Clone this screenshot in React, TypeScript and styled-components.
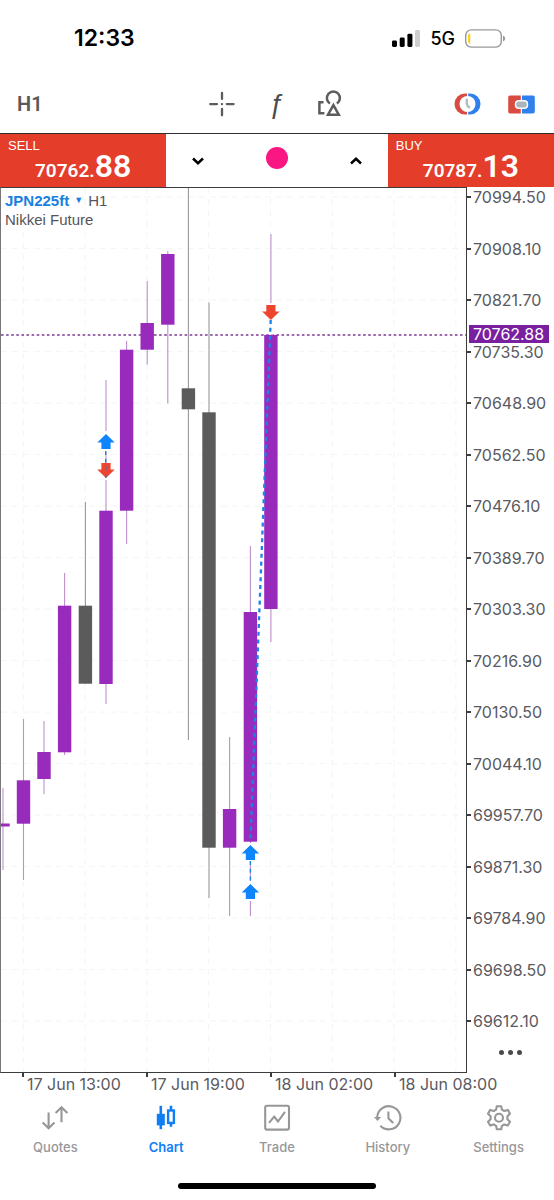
import React from "react";
import styled, { createGlobalStyle } from "styled-components";

const GlobalStyle = createGlobalStyle`
  * { box-sizing: border-box; }
  body {
    margin: 0;
    background: #fff;
    font-family: Inter, "Liberation Sans", sans-serif;
    color: #5a5a5f;
  }
  button { font: inherit; color: inherit; background: none; border: 0; padding: 0; margin: 0; }
  svg { display: block; }
`;

const Screen = styled.div`
  display: flex;
  flex-direction: column;
  min-height: 100vh;
  background: #fff;
  overflow: hidden;
`;

const StatusBar = styled.header`
  display: flex;
  align-items: center;
  justify-content: space-between;
  height: 76px;
  padding: 0 48px 0 74px;
`;

const Clock = styled.time`
  font-size: 23px;
  font-weight: 600;
  color: #000;
`;

const StatusIcons = styled.div`
  display: flex;
  align-items: center;
  gap: 10px;
  color: #000;
  font-size: 18px;
  font-weight: 500;
`;

const Toolbar = styled.nav`
  display: grid;
  grid-template-columns: 1fr auto 1fr;
  align-items: center;
  height: 56px;
  margin-bottom: 1px;
  padding: 0 19px 0 17px;
`;

const ToolGroup = styled.div<{ $end?: boolean }>`
  display: flex;
  align-items: center;
  justify-content: ${(p) => (p.$end ? "flex-end" : "center")};
  gap: 26px;
`;

const ToolButton = styled.button`
  display: flex;
  align-items: center;
  justify-content: center;
  width: 28px;
  height: 28px;
`;

const FunctionGlyph = styled.span`
  font-family: "Liberation Sans", sans-serif;
  font-style: italic;
  font-size: 27px;
  line-height: 28px;
  color: #4c4c4c;
`;

const Timeframe = styled.button`
  justify-self: start;
  font-family: Roboto, "Liberation Sans", sans-serif;
  font-size: 20px;
  font-weight: 600;
  color: #5a5a5a;
`;

const QuoteBar = styled.section`
  display: grid;
  grid-template-columns: 3fr 4fr 3fr;
  height: 54px;
  border-top: 1px solid #2e2e2e;
`;

const PriceButton = styled.button`
  display: flex;
  flex-direction: column;
  align-items: stretch;
  padding: 4px 8px 0;
  background: #e43d2a;
  color: #fff;
  font-family: "Liberation Sans", sans-serif;
`;

const Side = styled.span`
  font-size: 13px;
  line-height: 16px;
  text-align: left;
`;

const Price = styled.span`
  font-family: Roboto, "Liberation Sans", sans-serif;
  font-size: 19px;
  font-weight: 600;
  line-height: 24px;
  text-align: center;
`;

const Pips = styled.span`
  font-size: 32px;
`;

const Volume = styled.div`
  display: grid;
  grid-template-columns: 64px 1fr 64px;
  align-items: center;
  justify-items: center;
`;

const Dot = styled.span`
  width: 22px;
  height: 22px;
  margin-bottom: 5px;
  border-radius: 50%;
  background: #fb1783;
`;

const ChartRow = styled.main`
  display: flex;
  flex: 1;
`;

const Plot = styled.div`
  position: relative;
  flex: 1;
  min-width: 0;
  border: 1px solid #3c3c3e;
  border-left-color: #77777a;
  overflow: hidden;
`;

const ChartTitle = styled.div`
  position: absolute;
  top: 3px;
  left: 4px;
  font-family: "Liberation Sans", sans-serif;
  font-size: 15px;
  line-height: 19px;
  color: #55555a;
`;

const TitleLine = styled.div`
  display: flex;
  align-items: center;
  height: 19px;
`;

const SymbolButton = styled.button`
  display: flex;
  align-items: center;
  gap: 5px;
  margin-right: 5px;
  font-weight: 700;
  color: #1a80e0;
`;

const Caret = styled.span`
  font-size: 9px;
`;

const PriceAxis = styled.aside`
  position: relative;
  display: flex;
  flex-direction: column;
  justify-content: space-between;
  width: 87px;
  padding: 2px 0 44px;
`;

const AxisLabel = styled.span`
  display: flex;
  align-items: center;
  gap: 2px;
  font-size: 16px;
  line-height: 16px;

  &::before {
    content: "";
    width: 4px;
    height: 2px;
    background: #3c3c3e;
  }
`;

const CurrentPrice = styled.span`
  position: absolute;
  top: 138px;
  left: 2px;
  right: 5px;
  padding: 1px 0 1px 4px;
  background: #7820a0;
  color: #fff;
  font-size: 16px;
  line-height: 16px;
`;

const More = styled.button`
  position: absolute;
  right: 32px;
  bottom: 14px;
  display: flex;
  gap: 4px;
  height: 14px;
  align-items: center;
`;

const MoreDot = styled.i`
  width: 5px;
  height: 5px;
  border-radius: 50%;
  background: #4a4a4c;
`;

const TimeAxis = styled.div`
  display: flex;
  height: 21px;
  padding-left: 22px;
  overflow: hidden;
`;

const TimeLabel = styled.span`
  position: relative;
  flex: 0 0 124px;
  padding: 2px 0 0 5px;
  font-size: 16px;
  line-height: 18px;
  white-space: nowrap;

  &::before {
    content: "";
    position: absolute;
    top: 0;
    left: 0;
    width: 2px;
    height: 4px;
    background: #3c3c3e;
  }
`;

const TabBar = styled.nav`
  display: grid;
  grid-template-columns: repeat(5, 1fr);
  height: 89px;
  padding-top: 10px;
`;

const Tab = styled.button<{ $active?: boolean }>`
  display: flex;
  flex-direction: column;
  align-items: center;
  gap: 7px;
  height: 56px;
  color: ${(p) => (p.$active ? "#0f7ef5" : "#97979a")};
  font-size: 13px;
  font-weight: ${(p) => (p.$active ? 600 : 500)};
  line-height: 16px;
`;

const HomeIndicator = styled.div`
  align-self: center;
  width: 198px;
  height: 6px;
  margin-bottom: 11px;
  border-radius: 3px;
  background: #000;
`;

/* Candles in plot pixels: centre x, wick top/bottom, body top/bottom. */
type Candle = { x: number; high: number; low: number; top: number; bottom: number; down?: boolean };

const candles: Candle[] = [
  { x: 2, high: 600, low: 682, top: 635.5, bottom: 638.5 },
  { x: 22.5, high: 531, low: 692, top: 592.3, bottom: 635.7 },
  { x: 43, high: 533, low: 606, top: 564, bottom: 591 },
  { x: 63.6, high: 385, low: 567, top: 417.7, bottom: 564.3 },
  { x: 84.4, high: 314, low: 496, top: 417.7, bottom: 495.7, down: true },
  { x: 105, high: 192, low: 516, top: 322.7, bottom: 496 },
  { x: 125.6, high: 153, low: 356, top: 161.7, bottom: 322.7 },
  { x: 146.2, high: 93, low: 176.5, top: 135, bottom: 161.7 },
  { x: 166.8, high: 63, low: 215.5, top: 66, bottom: 136.7 },
  { x: 187.4, high: 0, low: 552, top: 200.3, bottom: 221.3, down: true },
  { x: 208, high: 114.5, low: 710, top: 224.3, bottom: 659.7, down: true },
  { x: 228.6, high: 549, low: 728, top: 621, bottom: 659.7 },
  { x: 249.4, high: 358, low: 728, top: 424, bottom: 653.7 },
  { x: 269.9, high: 46, low: 454, top: 147, bottom: 421 },
];

const prices = [
  "70994.50", "70908.10", "70821.70", "70735.30", "70648.90", "70562.50",
  "70476.10", "70389.70", "70303.30", "70216.90", "70130.50", "70044.10",
  "69957.70", "69871.30", "69784.90", "69698.50", "69612.10",
];
const times = ["17 Jun 13:00", "17 Jun 19:00", "18 Jun 02:00", "18 Jun 08:00"];

const Arrow = ({ x, y, sell }: { x: number; y: number; sell?: boolean }) => (
  <g transform={`translate(${x} ${y}) ${sell ? "scale(1 -1)" : ""}`}>
    <path d="M0-7.5 8.7 1H4.6V7.5H-4.6V1H-8.7z" fill={sell ? "#ee452f" : "#0e85fc"} />
  </g>
);

const Candlesticks = () => (
  <svg width="100%" height="884" role="img" aria-label="JPN225ft hourly candlestick chart">
    <g stroke="#f1f6f6" strokeDasharray="6 5">
      {prices.map((p, i) => (
        <line key={p} x1="0" x2="100%" y1={9 + i * 51.5} y2={9 + i * 51.5} />
      ))}
      {Array.from({ length: 16 }, (_, i) => (
        <line key={i} x1={22.3 + i * 61.8} x2={22.3 + i * 61.8} y1="0" y2="100%" />
      ))}
    </g>
    <line x1="0" x2="100%" y1="147" y2="147" stroke="#7c3a93" strokeWidth="1.6" strokeDasharray="2.6 2.5" />
    {candles.map((c) => (
      <g key={c.x}>
        <line x1={c.x} x2={c.x} y1={c.high} y2={c.low} stroke={c.down ? "#99999b" : "#bd8fcb"} strokeWidth="1.1" />
        <rect x={c.x - 6.7} y={c.top} width="13.4" height={c.bottom - c.top} fill={c.down ? "#5b5b5b" : "#982abc"} />
      </g>
    ))}
    <g fill="#fff">
      <rect x="103" y="243" width="4" height="49" />
      <rect x="268" y="115" width="4" height="31.5" />
      <rect x="247.5" y="655" width="4" height="58" />
    </g>
    <line x1="105" x2="105" y1="264" y2="276" stroke="#bd8fcb" />
    <line x1="249.4" x2="249.4" y1="673" y2="693" stroke="#bd8fcb" />
    <Arrow x={105} y={253.5} />
    <Arrow x={105} y={282.5} sell />
    <Arrow x={269.9} y={124.5} sell />
    <Arrow x={249.4} y={664.5} />
    <Arrow x={249.4} y={703.5} />
    <g stroke="#1b82e8" strokeWidth="2.3" strokeDasharray="4 3.8">
      <line x1="269.7" x2="249.4" y1="132" y2="654" />
    </g>
    <g stroke="#1b82e8" strokeWidth="1.4" strokeDasharray="4 3.8">
      <line x1="104.7" x2="104.7" y1="263" y2="290" />
      <line x1="249.4" x2="249.4" y1="673" y2="693" />
    </g>
  </svg>
);

const SignalIcon = () => (
  <svg width="28" height="17" viewBox="0 0 28 17">
    <rect x="0" y="10.5" width="5" height="6.5" rx="1.4" />
    <rect x="7.7" y="7.5" width="5" height="9.5" rx="1.4" />
    <rect x="15.4" y="3.8" width="5" height="13.2" rx="1.4" />
    <rect x="23" y="0" width="5" height="17" rx="1.4" fill="#cfcfcf" />
  </svg>
);

const BatteryIcon = () => (
  <svg width="41" height="19" viewBox="0 0 41 19">
    <rect x=".7" y=".9" width="35.6" height="17.2" rx="5.5" fill="none" stroke="#99999b" strokeWidth="1.4" />
    <path d="M3 7Q3 4.5 5.2 4V15Q3 14.5 3 12z" fill="#f8d31c" />
    <path d="M38 6.4Q40.2 7.3 40.2 9.5T38 12.6z" fill="#99999b" />
  </svg>
);

const CrosshairIcon = () => (
  <svg width="28" height="28" viewBox="0 0 28 28" stroke="#5c5c5c" strokeWidth="2.3" strokeLinecap="round">
    <path d="M14 2.8V8.9M14 19V25.3M2.2 14.1H9M18.8 14.1H25.6" />
    <circle cx="14" cy="14.1" r=".5" strokeWidth="1.4" />
  </svg>
);

const ShapesIcon = () => (
  <svg width="28" height="28" viewBox="0 0 28 28" fill="none" stroke="#5c5c5c" strokeWidth="2.5">
    <path d="M7.5 12.3H3.4V23.2H8.4" />
    <path d="M13.9 13.5A6.5 6.5 0 1 1 20.9 13.5" />
    <path d="M17.4 15.1 12 24.7H22.8z" />
  </svg>
);

const SessionIcon = () => (
  <svg width="27" height="22" viewBox="0 0 27 22">
    <path d="M13 .5H11A10.5 10.5 0 0 0 11 21.5H13z" fill="#d94b40" />
    <path d="M14 .5H16A10.5 10.5 0 0 1 16 21.5H14z" fill="#2f80ed" />
    <circle cx="13.5" cy="11" r="8" fill="#fff" />
    <path d="M13 .5H14.2V21.5H13z" fill="#fff" />
    <path d="M12.8 5.8V10.5Q12.8 13 16 14.8" fill="none" stroke="#b3bcc2" strokeWidth="2.4" />
  </svg>
);

const LinkIcon = () => (
  <svg width="27" height="19" viewBox="0 0 27 19">
    <path d="M12.8.5H2A1.8 1.8 0 0 0 .2 2.3V16.7A1.8 1.8 0 0 0 2 18.5H12.8z" fill="#d94b40" />
    <path d="M14 .5H25A1.8 1.8 0 0 1 26.8 2.3V16.7A1.8 1.8 0 0 1 25 18.5H14z" fill="#2f80ed" />
    <rect x="6.8" y="5" width="13.4" height="9" rx="4" fill="#fff" />
    <rect x="8.2" y="6.5" width="10.6" height="6" rx="2.7" fill="#aab4bb" />
  </svg>
);

const ChevronIcon = ({ up }: { up?: boolean }) => (
  <svg width="12" height="8" viewBox="0 0 12 8" fill="none" stroke="#000" strokeWidth="2.5">
    <path d={up ? "M1 6.5 6 1.8 11 6.5" : "M1 1.5 6 6.2 11 1.5"} />
  </svg>
);

const tabIcon = { width: 28, height: 28, viewBox: "0 0 28 28", fill: "none", stroke: "currentColor", strokeWidth: 2.1 };

const QuotesIcon = () => (
  <svg {...tabIcon}>
    <path d="M7.6 8.5V23.8M1.7 18.5 7.6 24.2 13.5 18.5M20.5 18.2V3.8M14.6 9 20.5 3.3 26.4 9" />
  </svg>
);

const ChartIcon = () => (
  <svg {...tabIcon}>
    <path d="M8.8 1.8V25.2" strokeWidth="2.6" />
    <rect x="4.8" y="9.8" width="8" height="11.6" fill="currentColor" stroke="none" />
    <path d="M19 1.8V7M19 18.5V22.8" strokeWidth="2.6" />
    <rect x="16.1" y="6.5" width="5.8" height="12.4" strokeWidth="2.4" />
  </svg>
);

const TradeIcon = () => (
  <svg {...tabIcon}>
    <rect x="2.2" y="1.8" width="23.8" height="23.8" rx="1.8" />
    <path d="M6 18.8 11.2 12.6 15 17.5 22 7.8" />
  </svg>
);

const HistoryIcon = () => (
  <svg {...tabIcon}>
    <path d="M3.2 13.5A11.6 11.6 0 1 1 6.4 21.8" />
    <path d="M0 12.9H7L3.5 17z" fill="currentColor" stroke="none" />
    <path d="M14.4 7.5V14.2L19.2 19" />
  </svg>
);

const SettingsIcon = () => (
  <svg {...tabIcon} strokeLinejoin="round">
    <circle cx="14" cy="13.7" r="4" />
    <path d="M11.8 2.2H16.2L16.9 5.6 19.3 7 22.8 5.9 25 9.7 22.4 12.2V15.2L25 17.7 22.8 21.5 19.3 20.4 16.9 21.8 16.2 25.2H11.8L11.1 21.8 8.7 20.4 5.2 21.5 3 17.7 5.6 15.2V12.2L3 9.7 5.2 5.9 8.7 7 11.1 5.6z" />
  </svg>
);

const tabs = [
  { name: "Quotes", Icon: QuotesIcon },
  { name: "Chart", Icon: ChartIcon, active: true },
  { name: "Trade", Icon: TradeIcon },
  { name: "History", Icon: HistoryIcon },
  { name: "Settings", Icon: SettingsIcon },
];

export default function App() {
  return (
    <Screen>
      <GlobalStyle />
      <StatusBar>
        <Clock>12:33</Clock>
        <StatusIcons>
          <SignalIcon />
          <span>5G</span>
          <BatteryIcon />
        </StatusIcons>
      </StatusBar>
      <Toolbar>
        <Timeframe>H1</Timeframe>
        <ToolGroup>
          <ToolButton aria-label="Crosshair"><CrosshairIcon /></ToolButton>
          <ToolButton aria-label="Indicators"><FunctionGlyph>ƒ</FunctionGlyph></ToolButton>
          <ToolButton aria-label="Objects"><ShapesIcon /></ToolButton>
        </ToolGroup>
        <ToolGroup $end>
          <ToolButton aria-label="Session"><SessionIcon /></ToolButton>
          <ToolButton aria-label="One click trading"><LinkIcon /></ToolButton>
        </ToolGroup>
      </Toolbar>
      <QuoteBar>
        <PriceButton>
          <Side>SELL</Side>
          <Price>70762.<Pips>88</Pips></Price>
        </PriceButton>
        <Volume>
          <ToolButton aria-label="Decrease volume"><ChevronIcon /></ToolButton>
          <Dot />
          <ToolButton aria-label="Increase volume"><ChevronIcon up /></ToolButton>
        </Volume>
        <PriceButton>
          <Side>BUY</Side>
          <Price>70787.<Pips>13</Pips></Price>
        </PriceButton>
      </QuoteBar>
      <ChartRow>
        <Plot>
          <Candlesticks />
          <ChartTitle>
            <TitleLine>
              <SymbolButton>JPN225ft<Caret>▼</Caret></SymbolButton>
              H1
            </TitleLine>
            <TitleLine>Nikkei Future</TitleLine>
          </ChartTitle>
        </Plot>
        <PriceAxis>
          {prices.map((p) => <AxisLabel key={p}>{p}</AxisLabel>)}
          <CurrentPrice>70762.88</CurrentPrice>
          <More aria-label="More"><MoreDot /><MoreDot /><MoreDot /></More>
        </PriceAxis>
      </ChartRow>
      <TimeAxis>
        {times.map((t) => <TimeLabel key={t}>{t}</TimeLabel>)}
      </TimeAxis>
      <TabBar>
        {tabs.map(({ name, Icon, active }) => (
          <Tab key={name} $active={active}>
            <Icon />
            {name}
          </Tab>
        ))}
      </TabBar>
      <HomeIndicator />
    </Screen>
  );
}
